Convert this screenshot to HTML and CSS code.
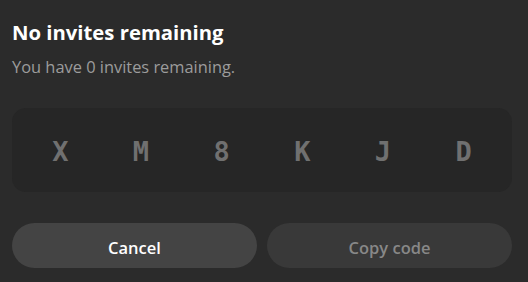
FILE: index.html
```html
<!DOCTYPE html>
<html>
<head>
<meta charset="utf-8">
<link rel="stylesheet" href="styles.css">
</head>
<body>
<div class="dialog">
  <h1 class="title">No invites remaining</h1>
  <p class="subtitle">You have 0 invites remaining.</p>
  <div class="code">
    <span class="char">X</span>
    <span class="char">M</span>
    <span class="char">8</span>
    <span class="char">K</span>
    <span class="char">J</span>
    <span class="char">D</span>
  </div>
  <div class="actions">
    <button class="btn btn-cancel">Cancel</button>
    <button class="btn btn-copy" disabled>Copy code</button>
  </div>
</div>
</body>
</html>
```
FILE: styles.css
```css
html, body {
  margin: 0;
  padding: 0;
  background: #2b2b2b;
}
body {
  width: 528px;
  height: 282px;
  overflow: hidden;
  font-family: "Open Sans", "Noto Sans", sans-serif;
}
.dialog {
  padding: 18px 16px 0 12px;
  display: flex;
  flex-direction: column;
}
.title {
  margin: 0;
  font-size: 20.3px;
  font-weight: 700;
  color: #ffffff;
  line-height: 28px;
}
.subtitle {
  margin: 10px 0 0;
  font-size: 16.4px;
  color: #9c9c9c;
  line-height: 22px;
}
.code {
  margin-top: 30px;
  height: 84px;
  background: #262626;
  border-radius: 14px;
  padding: 2px 8px 0;
  box-sizing: border-box;
  display: grid;
  grid-template-columns: repeat(6, 1fr);
  align-items: center;
}
.char {
  text-align: center;
  font-family: "DejaVu Sans Mono", monospace;
  font-weight: 700;
  font-size: 27px;
  color: #707070;
}
.actions {
  margin-top: 31px;
  display: grid;
  grid-template-columns: 1fr 1fr;
  gap: 10px;
}
.btn {
  height: 45px;
  border: none;
  border-radius: 23px;
  font-family: "Open Sans", "Noto Sans", sans-serif;
  font-size: 16.5px;
  font-weight: 600;
  padding: 3px 0 0;
}
.btn-cancel {
  background: #444444;
  color: #ffffff;
}
.btn-copy {
  background: #393939;
  color: #888888;
}
```
